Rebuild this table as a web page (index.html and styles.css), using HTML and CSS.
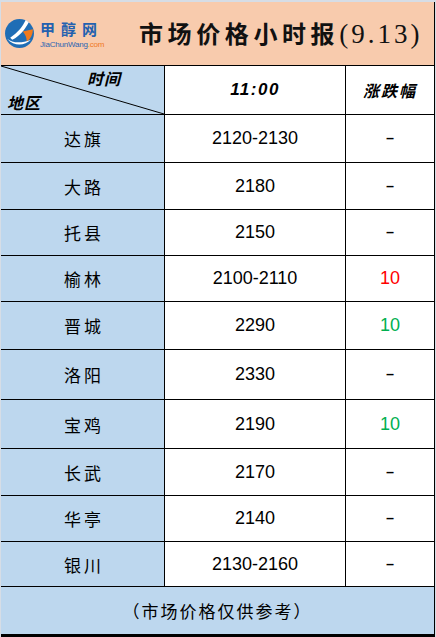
FILE: index.html
```html
<!DOCTYPE html>
<html lang="zh">
<head>
<meta charset="utf-8">
<link rel="stylesheet" href="styles.css">
</head>
<body>
<div class="sheet">
  <header class="banner">
    <div class="logo">
      <svg class="logo-mark" width="31" height="31" viewBox="0 0 30 30">
        <circle cx="15" cy="15" r="14" fill="#1f6db5"/>
        <path d="M21 2 C18 8 14 14 6 19 L8 21 C16 17 20 11 24 4 Z" fill="#fff"/>
        <path d="M18 13 L28 11 C28 16 26 20 22 23 C22 18 20 15 18 13 Z" fill="#f07a1e"/>
        <path d="M3 20 C8 24 16 25 26 21 C20 27 10 28 3 20 Z" fill="#fff"/>
      </svg>
      <div class="logo-text">
        <div class="logo-cn">甲醇网</div>
        <div class="logo-en">JiaChunWang<span class="dot">.com</span></div>
      </div>
    </div>
    <h1 class="title"><span class="title-cn">市场价格小时报</span><span class="title-num">(9.13)</span></h1>
  </header>
  <div class="table">
    <div class="cell corner">
      <svg class="diag" width="163" height="48" viewBox="0 0 163 48" preserveAspectRatio="none"><line x1="0" y1="0" x2="163" y2="48" stroke="#000" stroke-width="1"/></svg>
      <span class="c-time">时间</span>
      <span class="c-area">地区</span>
    </div>
    <div class="cell head hour">11:00</div>
    <div class="cell head chg">涨跌幅</div>

    <div class="cell name">达旗</div><div class="cell num">2120-2130</div><div class="cell diff"><span class="dash">-</span></div>
    <div class="cell name">大路</div><div class="cell num">2180</div><div class="cell diff"><span class="dash">-</span></div>
    <div class="cell name">托县</div><div class="cell num">2150</div><div class="cell diff"><span class="dash">-</span></div>
    <div class="cell name">榆林</div><div class="cell num">2100-2110</div><div class="cell diff up">10</div>
    <div class="cell name">晋城</div><div class="cell num">2290</div><div class="cell diff down">10</div>
    <div class="cell name">洛阳</div><div class="cell num">2330</div><div class="cell diff"><span class="dash">-</span></div>
    <div class="cell name">宝鸡</div><div class="cell num">2190</div><div class="cell diff down">10</div>
    <div class="cell name">长武</div><div class="cell num">2170</div><div class="cell diff"><span class="dash">-</span></div>
    <div class="cell name">华亭</div><div class="cell num">2140</div><div class="cell diff"><span class="dash">-</span></div>
    <div class="cell name">银川</div><div class="cell num">2130-2160</div><div class="cell diff"><span class="dash">-</span></div>

    <div class="cell foot">（市场价格仅供参考）</div>
  </div>
</div>
</body>
</html>
```
FILE: styles.css
```css
html, body {
  margin: 0;
  padding: 0;
}
body {
  width: 436px;
  height: 637px;
  background: #d6dde6;
  overflow: hidden;
  font-family: "Noto Sans CJK SC", "Liberation Sans", sans-serif;
}
.sheet {
  margin: 2px 1px 0 1px;
  width: 434px;
  background: #000;
  border-bottom: 3px solid #000;
}
.banner {
  height: 63px;
  width: 433px;
  background: #f8cbad;
  border-bottom: 1px solid #000;
  display: flex;
  align-items: center;
}
.logo {
  display: flex;
  align-items: center;
  margin-left: 3px;
  width: 128px;
}
.logo-mark {
  flex: none;
}
.logo-text {
  margin-left: 5px;
  display: flex;
  flex-direction: column;
  gap: 4px;
  margin-top: 2px;
}
.logo-cn {
  color: #2361b0;
  font-size: 15px;
  font-weight: 700;
  letter-spacing: 6px;
  line-height: 15px;
  height: 15px;
}
.logo-en {
  color: #2b64b2;
  font-family: "Liberation Sans", sans-serif;
  font-size: 8px;
  letter-spacing: -0.2px;
  line-height: 9px;
  height: 9px;
}
.logo-en .dot {
  color: #f07a1e;
}
.title {
  margin: 0;
  margin-left: 7px;
  font-weight: 700;
  font-size: 24px;
  line-height: 30px;
  color: #111;
  white-space: nowrap;
}
.title-cn {
  letter-spacing: 4.6px;
}
.title-num {
  font-family: "Liberation Serif", serif;
  font-weight: 400;
  font-size: 27px;
  letter-spacing: 3px;
}
.table {
  display: grid;
  grid-template-columns: 163px 180px 88px;
  grid-template-rows: 48px 47px 46px 45px 45px 47px 49px 48px 46px 45px 44px 47px;
  gap: 1px;
  width: 433px;
  padding-right: 1px;
  background: #000;
}
.cell {
  background: #fff;
  display: flex;
  align-items: center;
  justify-content: center;
  font-size: 18px;
  color: #000;
}
.corner {
  background: #bdd7ee;
  position: relative;
  display: block;
}
.diag {
  position: absolute;
  left: 0;
  top: 0;
}
.c-time, .c-area {
  position: absolute;
  font-size: 16px;
  font-weight: 700;
  font-style: italic;
  line-height: 20px;
  letter-spacing: 1px;
}
.c-time {
  left: 86px;
  top: 2px;
}
.c-area {
  left: 6px;
  top: 26px;
}
.head {
  font-weight: 700;
  font-style: italic;
}
.hour {
  font-family: "Liberation Sans", sans-serif;
  font-size: 17px;
  letter-spacing: 1.5px;
}
.chg {
  font-size: 16px;
  letter-spacing: 2px;
}
.name {
  background: #bdd7ee;
  font-size: 17px;
  letter-spacing: 3px;
  padding-left: 3px;
}
.num, .diff {
  font-family: "Liberation Sans", sans-serif;
  font-size: 18px;
}
.dash {
  display: inline-block;
  transform: scaleX(1.6);
}
.up {
  color: #ff0000;
}
.down {
  color: #00b050;
}
.foot {
  grid-column: 1 / 4;
  background: #bdd7ee;
  font-size: 17px;
  letter-spacing: 2px;
}
```
